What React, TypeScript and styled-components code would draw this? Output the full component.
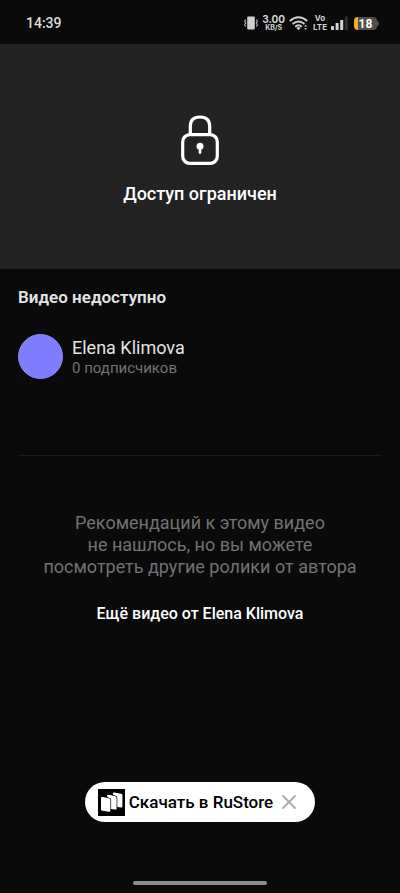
import React from 'react';
import styled, { createGlobalStyle } from 'styled-components';

const GlobalStyle = createGlobalStyle`
  *, *::before, *::after { box-sizing: border-box; }
  body {
    margin: 0;
    background: #0a0a0a;
    color: #e6e6e6;
    font-family: Roboto, "Noto Sans", sans-serif;
  }
`;

const Page = styled.div`
  min-height: 100vh;
  display: flex;
  flex-direction: column;
`;

const StatusBar = styled.header`
  height: 44px;
  padding: 2px 21px 0 26px;
  display: flex;
  align-items: center;
  justify-content: space-between;
`;

const Clock = styled.time`
  font-size: 14px;
  line-height: 16px;
  font-weight: 500;
  color: #dcdcdc;
`;

const StatusIcons = styled.div`
  display: flex;
  align-items: center;
  gap: 4px;
  svg { display: block; }
`;

const Stack = styled.div`
  display: flex;
  flex-direction: column;
  align-items: center;
  font-family: Inter, Roboto, sans-serif;
  font-weight: 700;
  color: #d2d2d2;
`;

const StackLine = styled.span<{ $size: number; $height: number }>`
  font-size: ${({ $size }) => $size}px;
  line-height: ${({ $height }) => $height}px;
`;

const BatteryGroup = styled.div`
  margin-left: 2px;
  display: flex;
  align-items: center;
`;

const Battery = styled.div`
  width: 23px;
  height: 13px;
  border-radius: 4px;
  background: linear-gradient(to right, #f5b01c 4px, #505050 4px);
  color: #ffffff;
  font-size: 12px;
  line-height: 14px;
  font-weight: 700;
  text-align: center;
`;

const Player = styled.section`
  aspect-ratio: 16 / 9;
  display: flex;
  flex-direction: column;
  align-items: center;
  justify-content: center;
  gap: 17px;
  padding-top: 8px;
  background: #232323;
  svg { display: block; }
`;

const PlayerTitle = styled.h1`
  margin: 0;
  font-size: 18px;
  line-height: 24px;
  font-weight: 500;
  color: #ffffff;
`;

const Info = styled.section`
  margin: 0 18px;
  padding: 17px 0 76px;
  border-bottom: 1px solid #1d1d1d;
`;

const VideoTitle = styled.h2`
  margin: 0;
  font-size: 17px;
  line-height: 22px;
  font-weight: 600;
  color: #e3e3e6;
`;

const Author = styled.a`
  margin-top: 26px;
  display: flex;
  align-items: center;
  gap: 9px;
  color: inherit;
  text-decoration: none;
`;

const Avatar = styled.span`
  width: 45px;
  height: 45px;
  border-radius: 50%;
  border: 1px solid #8b88fb;
  background: #7f7dff;
`;

const AuthorText = styled.span`
  display: flex;
  flex-direction: column;
`;

const AuthorName = styled.span`
  font-size: 18px;
  line-height: 22px;
  color: #e3e3e6;
`;

const Followers = styled.span`
  font-size: 15px;
  line-height: 18px;
  color: #727274;
`;

const Empty = styled.section`
  padding: 56px 18px 0;
  display: flex;
  flex-direction: column;
  align-items: center;
  gap: 25px;
  text-align: center;
`;

const EmptyText = styled.p`
  margin: 0;
  font-size: 18px;
  line-height: 22px;
  color: #727274;
`;

const MoreLink = styled.a`
  font-size: 16px;
  line-height: 22px;
  font-weight: 500;
  color: #ffffff;
  text-decoration: none;
`;

const Footer = styled.footer`
  margin-top: auto;
  padding-bottom: 8px;
  display: flex;
  flex-direction: column;
  align-items: center;
  gap: 59px;
`;

const InstallPill = styled.div`
  height: 40px;
  padding: 0 16px 0 13px;
  display: flex;
  align-items: center;
  gap: 6px;
  border-radius: 20px;
  background: #ffffff;
`;

const InstallLink = styled.a`
  display: flex;
  align-items: center;
  gap: 4px;
  font-size: 17px;
  line-height: 22px;
  font-weight: 500;
  color: #000000;
  text-decoration: none;
  svg { display: block; }
`;

const CloseButton = styled.button`
  width: 20px;
  height: 20px;
  padding: 0;
  border: 0;
  background: none;
  cursor: pointer;
  svg { display: block; }
`;

const HomeHandle = styled.div`
  width: 134px;
  height: 4px;
  border-radius: 2px;
  background: #8c8c8c;
`;

const VibrateIcon = () => (
  <svg width="14" height="14" viewBox="0 0 14 14" aria-hidden="true">
    <rect x="3.2" y="0.5" width="7.6" height="13" rx="1" fill="#cfcfcf" />
    <path d="M1.6 3.5 L0.6 5.2 L1.8 7 L0.6 8.8 L1.6 10.5 M12.4 3.5 L13.4 5.2 L12.2 7 L13.4 8.8 L12.4 10.5" fill="none" stroke="#bdbdbd" strokeWidth="1.1" />
  </svg>
);

const WifiIcon = () => (
  <svg width="20" height="15" viewBox="0 0 20 15" aria-hidden="true">
    <g fill="none" stroke="#d2d2d2" strokeWidth="1.9">
      <path d="M0.8 5 Q9.5 -2.4 18.2 5" />
      <path d="M3.5 8 Q9.5 2.8 15.5 8" />
      <path d="M6.2 10.7 Q9.5 7.9 12.8 10.7" />
    </g>
    <path d="M7.4 11.8 Q9.5 10.4 11.6 11.8 L9.5 14.2 Z" fill="#d2d2d2" />
    <path d="M15 10.6 L16.6 8.8 L18.2 10.6 Z M15 12.2 L16.6 14 L18.2 12.2 Z" fill="#d2d2d2" />
  </svg>
);

const SignalIcon = () => (
  <svg width="17" height="14" viewBox="0 0 17 14" aria-hidden="true">
    <g fill="#d2d2d2">
      <rect x="0" y="10" width="3" height="4" rx="0.5" />
      <rect x="4.6" y="7" width="3" height="7" rx="0.5" />
      <rect x="9.2" y="4" width="3" height="10" rx="0.5" />
    </g>
    <rect x="13.8" y="0.5" width="3" height="13.5" rx="0.5" fill="#303030" />
  </svg>
);

const BatteryTip = () => (
  <svg width="2" height="5" viewBox="0 0 2 5" aria-hidden="true">
    <path d="M0 0 Q2 0 2 2.5 Q2 5 0 5 Z" fill="#505050" />
  </svg>
);

const LockIcon = () => (
  <svg width="38" height="50" viewBox="0 0 38 50" aria-hidden="true">
    <rect x="1.7" y="19.7" width="34.6" height="28.6" rx="7" fill="none" stroke="#fff" strokeWidth="3.2" />
    <path d="M9.3 19.5 V11.5 Q9.3 2 19 2 Q28.7 2 28.7 11.5 V19.5" fill="none" stroke="#fff" strokeWidth="3.2" />
    <circle cx="19" cy="31.2" r="3.5" fill="#fff" />
    <path d="M19 32 V37.8" stroke="#fff" strokeWidth="2.6" strokeLinecap="round" />
  </svg>
);

const StoreLogo = () => (
  <svg width="27" height="27" viewBox="0 0 27 27" aria-hidden="true">
    <rect width="27" height="27" fill="#000" />
    <g fill="#fff">
      <path d="M3 9.2 Q3 7.8 4.3 8 L8.6 8.7 Q9.6 9 10.2 9.1 L11.3 9.4 Q12.4 9.8 12.4 11 V21.6 Q12.4 23 11 22.8 L4.3 21.7 Q3 21.4 3 20.2 Z" />
      <path d="M9 7 Q9 5.6 10.4 5.8 L16.8 6.9 Q18.6 7.3 18.6 9 V19.4 Q18.6 20.8 17.2 20.6 L13.1 19.9 V10.8 Q13 9.3 11.4 8.8 Q9 8.4 9 7 Z" />
      <path d="M14.8 4.8 Q14.8 3.3 16.2 3.5 L23.2 4.7 Q24.4 5 24.4 6.2 V17.2 Q24.4 18.7 23 18.5 L19.3 17.9 V8.8 Q19.2 7 17.2 6.5 Q14.8 6.2 14.8 4.8 Z" />
    </g>
  </svg>
);

const CloseIcon = () => (
  <svg width="20" height="20" viewBox="0 0 20 20" aria-hidden="true">
    <path d="M4 4 L16 16 M16 4 L4 16" stroke="#a9abaf" strokeWidth="1.8" strokeLinecap="round" />
  </svg>
);

export default function App() {
  return (
    <>
      <GlobalStyle />
      <Page>
        <StatusBar>
          <Clock>14:39</Clock>
          <StatusIcons>
            <VibrateIcon />
            <Stack>
              <StackLine $size={10} $height={10}>3.00</StackLine>
              <StackLine $size={7} $height={8}>KB/S</StackLine>
            </Stack>
            <WifiIcon />
            <Stack>
              <StackLine $size={8} $height={9}>Vo</StackLine>
              <StackLine $size={8} $height={9}>LTE</StackLine>
            </Stack>
            <SignalIcon />
            <BatteryGroup>
              <Battery>18</Battery>
              <BatteryTip />
            </BatteryGroup>
          </StatusIcons>
        </StatusBar>
        <main>
          <Player>
            <LockIcon />
            <PlayerTitle>Доступ ограничен</PlayerTitle>
          </Player>
          <Info>
            <VideoTitle>Видео недоступно</VideoTitle>
            <Author href="#author">
              <Avatar />
              <AuthorText>
                <AuthorName>Elena Klimova</AuthorName>
                <Followers>0 подписчиков</Followers>
              </AuthorText>
            </Author>
          </Info>
          <Empty>
            <EmptyText>
              Рекомендаций к этому видео
              <br />
              не нашлось, но вы можете
              <br />
              посмотреть другие ролики от автора
            </EmptyText>
            <MoreLink href="#more">Ещё видео от Elena Klimova</MoreLink>
          </Empty>
        </main>
        <Footer>
          <InstallPill>
            <InstallLink href="#install">
              <StoreLogo />
              Скачать в RuStore
            </InstallLink>
            <CloseButton type="button" aria-label="Закрыть">
              <CloseIcon />
            </CloseButton>
          </InstallPill>
          <HomeHandle />
        </Footer>
      </Page>
    </>
  );
}
